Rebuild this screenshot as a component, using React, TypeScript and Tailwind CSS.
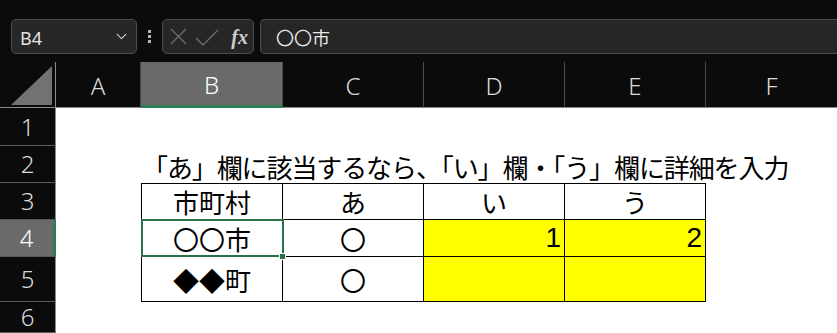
import { ChevronDown } from 'lucide-react';

const cols = ['A', 'B', 'C', 'D', 'E', 'F'];
const rows = [1, 2, 3, 4, 5, 6];

const jp = "font-['Noto_Sans_CJK_JP',sans-serif]";

function TableCell({
  children,
  className = '',
  top = false,
  left = false,
}: {
  children?: React.ReactNode;
  className?: string;
  top?: boolean;
  left?: boolean;
}) {
  return (
    <div
      className={`flex items-center border-r border-b border-black text-[26px] text-black ${jp} ${
        top ? 'border-t' : ''
      } ${left ? 'border-l' : ''} ${className}`}
    >
      {children}
    </div>
  );
}

export default function App() {
  return (
    <div className="w-[837px] h-[333px] overflow-hidden bg-[#0b0b0b] flex flex-col">
      {/* Formula bar */}
      <div className="h-[62px] flex items-start pt-[19px] pl-[11px] gap-0">
        <div className="w-[126px] h-[35px] rounded-[5px] border border-[#4e4e4e] bg-[#272727] flex items-center justify-between pl-[8px] pr-[6px]">
          <span className="font-['Noto_Sans',sans-serif] text-[18px] text-[#e2e2e2] leading-none mt-[3px]">B4</span>
          <ChevronDown size={17} strokeWidth={1.5} className="text-[#cfcfcf]" />
        </div>
        <div className="w-[25px] h-[35px] flex flex-col items-center justify-center gap-[2px]">
          <span className="w-[3px] h-[3px] bg-[#b5b5b5]" />
          <span className="w-[3px] h-[3px] bg-[#b5b5b5]" />
          <span className="w-[3px] h-[3px] bg-[#b5b5b5]" />
        </div>
        <div className="w-[92px] h-[35px] rounded-[5px] border border-[#4e4e4e] bg-[#262626] flex items-center pl-[6px] pr-[5px]">
          <svg width="52" height="33" viewBox="0 0 52 33" fill="none" stroke="#6c6c6c" strokeWidth="1.4">
            <path d="M2 9 L17 24 M17 9 L2 24" />
            <path d="M27 18 L34 25 L49 10" />
          </svg>
          <span className="ml-auto font-['Liberation_Serif',serif] italic font-bold text-[20px] text-[#cfcfcf] leading-none">fx</span>
        </div>
        <div className="ml-[6px] flex-1 h-[35px] rounded-l-[5px] border border-r-0 border-[#4e4e4e] bg-[#262626] flex items-center pl-[15px]">
          <span className={`${jp} text-[18px] text-[#e6e6e6] leading-none`}>〇〇市</span>
        </div>
      </div>

      {/* Sheet */}
      <div className="flex-1 grid grid-cols-[56px_85px_142px_141px_141px_141px_1fr] grid-rows-[46px_38px_37px_37px_37px_45px_1fr] bg-white">
        {/* Column headers */}
        <div className="bg-[#0b0b0b] border-r border-b border-[#8a8a8a] flex items-end justify-end pr-[3px] pb-[2px] pt-[5px]">
          <svg width="41" height="39" viewBox="0 0 41 39">
            <polygon points="41,0 41,39 0,39" fill="#727272" />
          </svg>
        </div>
        {cols.map((c) => (
          <div
            key={c}
            className={`flex items-center justify-center font-['Noto_Sans',sans-serif] font-light text-[24px] leading-none text-[#dcdcdc] border-b ${
              c === 'B'
                ? 'bg-[#6a6a6a] border-b-[3px] border-[#2f7d55] text-white'
                : 'bg-[#0b0b0b] border-[#8a8a8a]'
            } ${c !== 'F' ? 'border-r border-r-[#4c4c4c]' : ''}`}
          >
            <span className="mt-[2px]">{c}</span>
          </div>
        ))}

        {rows.map((r) => (
          <RowCells key={r} r={r} />
        ))}
      </div>
    </div>
  );
}

function RowHeader({ r }: { r: number }) {
  const selected = r === 4;
  return (
    <div
      className={`flex items-center justify-center font-['Noto_Sans',sans-serif] font-light text-[24px] leading-none border-b border-b-[#5a5a5a] ${
        selected
          ? 'bg-[#6a6a6a] text-white border-r-[3px] border-r-[#2f7d55]'
          : 'bg-[#0b0b0b] text-[#dcdcdc] border-r border-r-[#8a8a8a]'
      }`}
    >
      {r}
    </div>
  );
}

function RowCells({ r }: { r: number }) {
  const header = <RowHeader r={r} />;
  if (r === 2) {
    return (
      <>
        {header}
        <div />
        <div className="col-span-5 flex items-end">
          <span
            className={`${jp} text-[26px] text-black leading-none pb-[3px] pl-[1px] whitespace-nowrap tracking-[-1.1px]`}
          >
            「あ」欄に該当するなら、「い」欄・「う」欄に詳細を入力
          </span>
        </div>
      </>
    );
  }
  if (r === 3) {
    return (
      <>
        {header}
        <div />
        <TableCell top left className="justify-center">市町村</TableCell>
        <TableCell top className="justify-center">あ</TableCell>
        <TableCell top className="justify-center">い</TableCell>
        <TableCell top className="justify-center">う</TableCell>
        <div />
      </>
    );
  }
  if (r === 4) {
    return (
      <>
        {header}
        <div />
        <TableCell left className="justify-center relative">
          〇〇市
          <div className="absolute -left-px -top-px w-[143px] h-[38px] border-2 border-[#2a7049]" />
          <div className="absolute -right-[4px] -bottom-[4px] w-[7px] h-[7px] bg-[#2a7049] border border-white" />
        </TableCell>
        <TableCell className="justify-center">〇</TableCell>
        <TableCell className="justify-end pr-[3px] bg-[#ffff00]">
          <span className="font-['Liberation_Sans',sans-serif] text-[28px] leading-none">1</span>
        </TableCell>
        <TableCell className="justify-end pr-[3px] bg-[#ffff00]">
          <span className="font-['Liberation_Sans',sans-serif] text-[28px] leading-none">2</span>
        </TableCell>
        <div />
      </>
    );
  }
  if (r === 5) {
    return (
      <>
        {header}
        <div />
        <TableCell left className="justify-center">◆◆町</TableCell>
        <TableCell className="justify-center">〇</TableCell>
        <TableCell className="bg-[#ffff00]" />
        <TableCell className="bg-[#ffff00]" />
        <div />
      </>
    );
  }
  return (
    <>
      {header}
      <div className="col-span-6" />
    </>
  );
}
